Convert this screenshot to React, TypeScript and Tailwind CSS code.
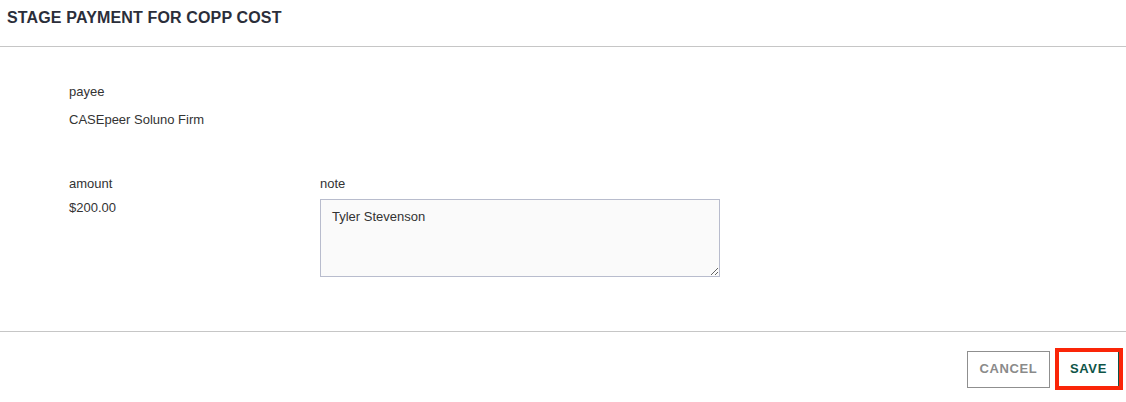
import React from "react";

export default function App() {
  return (
    <div
      className="w-[1126px] h-[402px] bg-white flex flex-col text-[#333]"
      style={{ fontFamily: '"Liberation Sans", Arial, sans-serif' }}
    >
      <div className="h-[47px] shrink-0 border-b border-[#c6c6c6] pl-[7px] pt-[8px]">
        <h1 className="text-[16px] font-bold leading-[20px] text-[#2b2e3a] tracking-[0.15px]">
          STAGE PAYMENT FOR COPP COST
        </h1>
      </div>
      <div className="h-[285px] shrink-0 border-b border-[#c6c6c6] pl-[69px] pt-[37px] text-[13px]">
        <div className="leading-[16px]">payee</div>
        <div className="mt-[12px] leading-[16px]">CASEpeer Soluno Firm</div>
        <div className="mt-[48px] flex">
          <div className="w-[251px]">
            <div className="leading-[16px]">amount</div>
            <div className="mt-[8px] leading-[16px]">$200.00</div>
          </div>
          <div>
            <div className="leading-[16px]">note</div>
            <textarea
              className="mt-[7px] block w-[400px] h-[78px] border border-[#b8bccd] bg-[#fafafa] px-[11px] py-[9px] text-[13px] text-[#333] leading-[16px] outline-none"
              style={{ fontFamily: '"Liberation Sans", Arial, sans-serif' }}
              defaultValue="Tyler Stevenson"
            />
          </div>
        </div>
      </div>
      <div className="flex justify-end items-center gap-[5px] pr-[3px] pt-[16px]">
        <button className="w-[83px] h-[37px] border border-[#8f8f8f] bg-white text-[#8a8a8a] text-[13px] font-bold tracking-[0.6px]">
          CANCEL
        </button>
        <div className="w-[68px] h-[42px] border-[4px] border-[#fa2508] flex items-center justify-center">
          <button className="w-full h-full bg-white text-[#0e5447] text-[13px] font-bold tracking-[0.6px] border-r border-[#0e5447]">
            SAVE
          </button>
        </div>
      </div>
    </div>
  );
}
